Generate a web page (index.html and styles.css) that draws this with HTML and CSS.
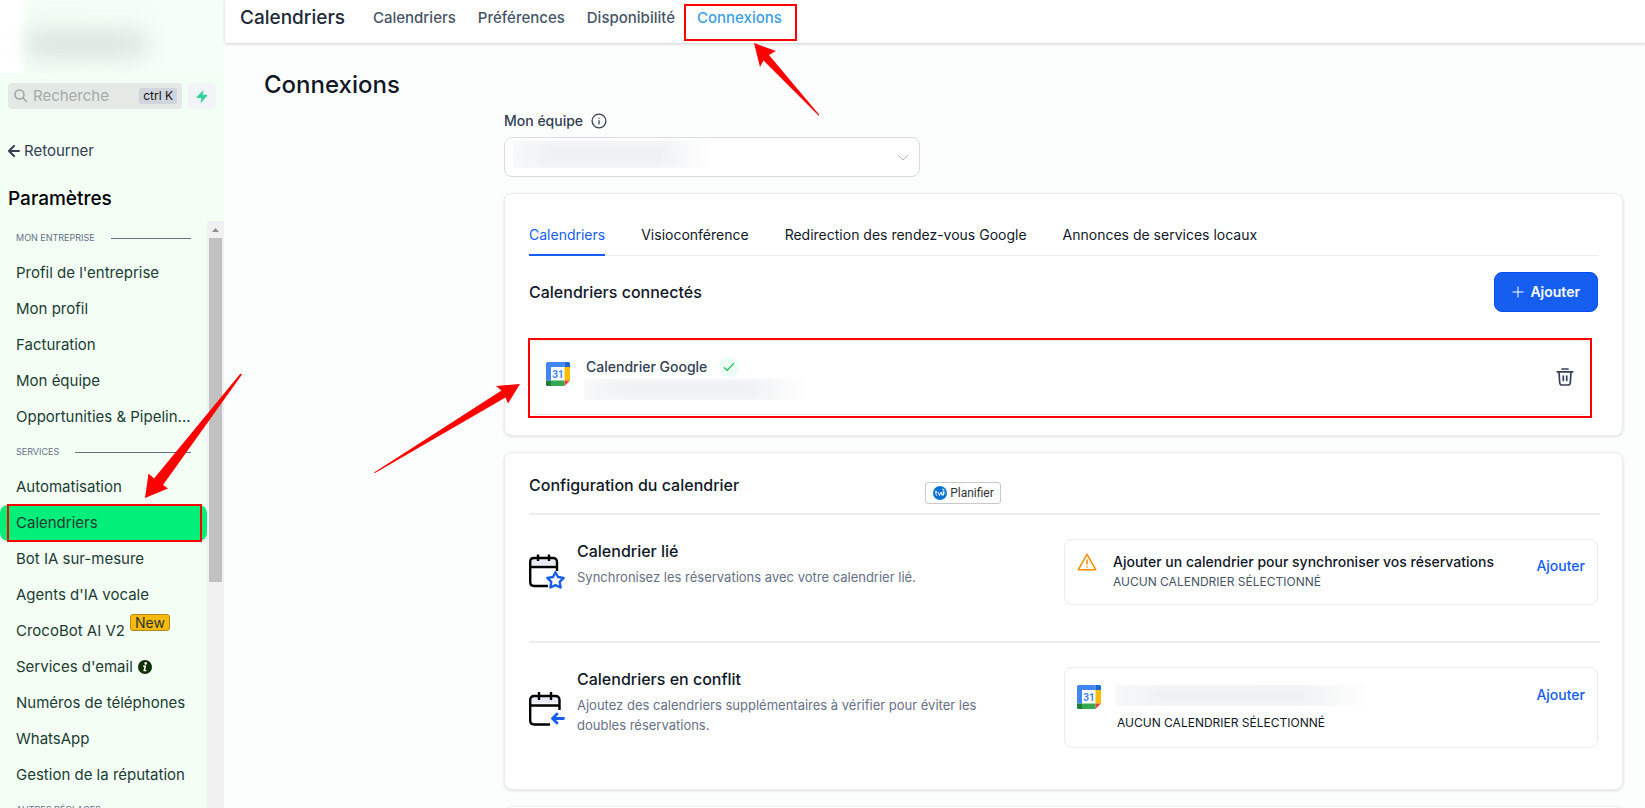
FILE: index.html
```html
<!DOCTYPE html>
<html lang="fr">
<head>
<meta charset="utf-8">
<title>Connexions - Calendriers</title>
<link rel="stylesheet" href="styles.css">
</head>
<body>
<svg class="defs" aria-hidden="true">
  <symbol id="gcal" viewBox="0 0 24 24">
    <path fill="#fff" d="M5 5h14v14H5z"/>
    <path fill="#4285f4" d="M1.500 0H18.500V5H5V18.500H0V1.500A1.500 1.500 0 0 1 1.500 0z"/>
    <path fill="#1967d2" d="M18.500 0h4A1.500 1.500 0 0 1 24 1.500V5h-5.500z"/>
    <path fill="#fbbc04" d="M18.500 5H24v13.500h-5.500z"/>
    <path fill="#34a853" d="M5 18.500h13.500V24H5z"/>
    <path fill="#188038" d="M0 18.500h5V24H1.500A1.500 1.500 0 0 1 0 22.500z"/>
    <path fill="#ea4335" d="M18.500 18.500H24L18.500 24z"/>
  </symbol>
</svg>

<div class="app">
  <aside class="sidebar">
    <div class="brand"><div class="brand-blur"></div></div>
    <div class="search-row">
      <label class="search">
        <svg width="14" height="14" viewBox="0 0 14 14" fill="none" stroke="#9aaba3" stroke-width="1.600"><circle cx="5.500" cy="5.500" r="4.500"/><path d="M8.800 8.800L13 13"/></svg>
        <input type="text" placeholder="Recherche" aria-label="Recherche">
        <kbd>ctrl K</kbd>
      </label>
      <button class="bolt" type="button" aria-label="Actions rapides">
        <svg width="12" height="13" viewBox="0 0 12 13" fill="#34d399"><path d="M7 0.500Q7.500 0 7.300 1L6.800 4.700H10.800Q11.800 4.900 11.200 5.800L5.300 12.600Q4.700 13 4.800 12.200L5.300 8H1Q0 7.800 0.700 6.900z"/></svg>
      </button>
    </div>
    <a class="back" href="#">
      <svg width="12" height="12" viewBox="0 0 12 12" fill="none" stroke="#344054" stroke-width="2" stroke-linecap="round" stroke-linejoin="round"><path d="M6 1L1 6l5 5M1.500 6h9.500"/></svg>
      Retourner
    </a>
    <h2 class="side-title">Paramètres</h2>
    <div class="nav-wrap">
      <nav class="nav">
        <div class="nav-head"><span>MON ENTREPRISE</span></div>
        <a href="#">Profil de l'entreprise</a>
        <a href="#">Mon profil</a>
        <a href="#">Facturation</a>
        <a href="#">Mon équipe</a>
        <a href="#">Opportunities &amp; Pipelin...</a>
        <div class="nav-head"><span>SERVICES</span></div>
        <a href="#">Automatisation</a>
        <a href="#" class="active">Calendriers<span class="mark mark-nav"></span></a>
        <a href="#">Bot IA sur-mesure</a>
        <a href="#">Agents d'IA vocale</a>
        <a href="#">CrocoBot AI V2 <span class="new">New</span></a>
        <a href="#">Services d'email
          <svg width="14" height="14" viewBox="0 0 14 14"><circle cx="7" cy="7" r="7" fill="#123008"/><circle cx="7.700" cy="3.400" r="1.300" fill="#fff"/><path d="M5.200 5.600h3l-1 4.300h1.200v1.400H5.300l1-4.300H5.200z" fill="#fff"/></svg>
        </a>
        <a href="#">Numéros de téléphones</a>
        <a href="#">WhatsApp</a>
        <a href="#">Gestion de la réputation</a>
        <div class="nav-head"><span>AUTRES RÉGLAGES</span></div>
      </nav>
      <div class="scrollbar">
        <svg width="17" height="17" viewBox="0 0 17 17"><path d="M5 11h7L8.500 7z" fill="#8f8f8f"/></svg>
        <div class="thumb"></div>
      </div>
    </div>
  </aside>

  <div class="main">
    <header class="topbar">
      <h1>Calendriers</h1>
      <nav class="top-links">
        <a href="#">Calendriers</a>
        <a href="#">Préférences</a>
        <a href="#">Disponibilité</a>
        <a href="#" class="current">Connexions<span class="mark mark-top"></span></a>
      </nav>
    </header>

    <main class="content">
      <h2 class="page-title">Connexions</h2>
      <div class="column">
        <div class="team">
          <label for="team">Mon équipe
            <svg width="16" height="16" viewBox="0 0 16 16" fill="none" stroke="#344054" stroke-width="1.300" stroke-linecap="round"><circle cx="8" cy="8" r="6.900"/><path d="M8 7.700v3.200M8 5.200v.1"/></svg>
          </label>
          <div class="select-box">
            <select id="team"><option></option></select>
            <span class="blur blur-team"></span>
            <svg class="chevron" width="12" height="8" viewBox="0 0 12 8" fill="none" stroke="#b4b9c2"><path d="M1 1l5 5 5-5"/></svg>
          </div>
        </div>

        <section class="card connected">
          <div class="tabs" role="tablist">
            <button type="button" role="tab" class="selected">Calendriers</button>
            <button type="button" role="tab">Visioconférence</button>
            <button type="button" role="tab">Redirection des rendez-vous Google</button>
            <button type="button" role="tab">Annonces de services locaux</button>
          </div>
          <div class="card-head">
            <h3>Calendriers connectés</h3>
            <button type="button" class="primary">
              <svg width="12" height="12" viewBox="0 0 12 12" stroke="#fff" fill="none"><path d="M6 .500v11M.500 6h11"/></svg>
              Ajouter
            </button>
          </div>
          <div class="account">
            <span class="mark mark-account"></span>
            <svg class="gcal" width="24" height="24"><use href="#gcal"/><text x="12" y="16">31</text></svg>
            <div class="account-text">
              <div class="account-name">Calendrier Google
                <span class="ok"><svg width="12" height="10" viewBox="0 0 12 10" fill="none" stroke="#12b75a" stroke-width="1.200"><path d="M1 5.300l3.200 3.200L11 1.200"/></svg></span>
              </div>
              <div class="blur blur-account"></div>
            </div>
            <button type="button" class="trash" aria-label="Supprimer">
              <svg width="18" height="18" viewBox="0 0 18 18" fill="none" stroke="#344054" stroke-width="1.700" stroke-linecap="round"><path d="M6 1h6M1.200 3.800h15.600M3 4l.7 10.700q.2 2.300 2.300 2.300h6q2.100 0 2.300-2.300L15 4M7.300 8v4.500M10.700 8v4.500"/></svg>
            </button>
          </div>
        </section>

        <section class="card config">
          <div class="config-head">
            <h3>Configuration du calendrier</h3>
            <button type="button" class="plan">
              <svg width="14" height="14" viewBox="0 0 14 14"><circle cx="7" cy="7" r="7" fill="#0b74d1"/><path d="M3 4.500v4q0 1 1.200.8M2 6h2.300M5 6l1.500 3.500L8 6l1.200 3.500L11 5.500M9 3.500q1.500-1 2 .4t-1.500 1.800M10.500 6v3.500M10.500 7h2" fill="none" stroke="#fff" stroke-width=".9"/></svg>
              Planifier
            </button>
          </div>
          <div class="setting">
            <svg class="cal-icon" width="36" height="36" viewBox="0 0 36 36" fill="none" stroke="#000" stroke-width="2.400">
              <path d="M2 12V9q0-4 4-4h18q4 0 4 4v3z" fill="#eaecf5" stroke="none"/>
              <path d="M28 18V9q0-4-4-4H5Q1.200 5 1.200 9v20q0 4 4 4H19M1.200 14H28M9 1.500V8M20 1.500V8"/>
              <path d="M26.500 19.300l2.500 4.700 5.600.9-3.900 4 .9 5.600-5.100-2.400-5.100 2.400.9-5.600-3.900-4 5.600-.9z" fill="#fff" stroke="#155eef" stroke-linejoin="round"/>
            </svg>
            <div class="setting-text">
              <h4>Calendrier lié</h4>
              <p>Synchronisez les réservations avec votre calendrier lié.</p>
            </div>
            <div class="box box-linked">
              <svg class="warn" width="20" height="18" viewBox="0 0 20 18" fill="none" stroke="#f79009" stroke-width="1.600" stroke-linejoin="round" stroke-linecap="round"><path d="M10 1.300L18.700 16.700H1.300zM10 7v4M10 13.700v.2"/></svg>
              <div class="box-text">
                <strong>Ajouter un calendrier pour synchroniser vos réservations</strong>
                <span>AUCUN CALENDRIER SÉLECTIONNÉ</span>
              </div>
              <button type="button" class="link">Ajouter</button>
            </div>
          </div>
          <div class="setting">
            <svg class="cal-icon" width="36" height="36" viewBox="0 0 36 36" fill="none" stroke="#000" stroke-width="2.400">
              <path d="M2 12V9q0-4 4-4h20q4 0 4 4v3z" fill="#eaecf5" stroke="none"/>
              <path d="M30.500 19V9q0-4-4-4H5.200q-4 0-4 4v20.500q0 4 4 4H21M1.200 14.500h29.300M10 1v8M22 1v8"/>
              <path d="M34.500 27.500H23.500M28 23l-4.500 4.500L28 32" stroke="#155eef" stroke-width="2.800" stroke-linecap="round" stroke-linejoin="round"/>
            </svg>
            <div class="setting-text">
              <h4>Calendriers en conflit</h4>
              <p>Ajoutez des calendriers supplémentaires à vérifier pour éviter les doubles réservations.</p>
            </div>
            <div class="box box-conflict">
              <svg class="gcal" width="24" height="24"><use href="#gcal"/><text x="12" y="16">31</text></svg>
              <div class="box-text">
                <div class="blur blur-box"></div>
                <span>AUCUN CALENDRIER SÉLECTIONNÉ</span>
              </div>
              <button type="button" class="link">Ajouter</button>
            </div>
          </div>
        </section>
        <section class="card"></section>
      </div>
    </main>
  </div>

  <svg class="arrow arrow-top" width="70" height="76" viewBox="0 0 70 76"><path d="M2 1L24 9 17 13 67 72.500V74L11.500 18.500 8 25z"/></svg>
  <svg class="arrow arrow-nav" width="100" height="128" viewBox="0 0 100 128"><path d="M2 127L5.500 102.500 11 107.500 97.500 2.500 99 3.500 20 114 25 117.500z"/></svg>
  <svg class="arrow arrow-account" width="148" height="92" viewBox="0 0 148 92"><path d="M147 2L123 4 128.500 8.500 1 90.500 2 91 132.500 15.500 135 21.500z"/></svg>
</div>
</body>
</html>
```
FILE: styles.css
```css
* { box-sizing: border-box; }

body {
  margin: 0;
  font-family: Inter, "Liberation Sans", sans-serif;
  font-size: 14px;
  line-height: 20px;
  color: #101828;
}

h1, h2, h3, h4, p { margin: 0; font-weight: 500; }
a { color: inherit; text-decoration: none; }
button { font: inherit; border: 0; padding: 0; background: none; color: inherit; }
svg { flex: none; display: block; }
.defs { position: absolute; width: 0; height: 0; }
.gcal text { font: 700 10px Roboto, sans-serif; fill: #4285f4; text-anchor: middle; }

.app {
  position: relative;
  display: flex;
  height: 100vh;
  overflow: hidden;
  background: #fcfefd;
}

/* Sidebar */
.sidebar {
  flex: none;
  width: 224px;
  display: flex;
  flex-direction: column;
  background: #f3fff5;
}

.brand {
  height: 73px;
  flex: none;
  overflow: hidden;
  background: linear-gradient(90deg, #fff 20px, #f3fdf5 30px, #f5fff7);
}

.brand-blur {
  width: 116px;
  height: 24px;
  margin: 32px 0 0 28px;
  background: #d7e3dc;
  filter: blur(11px);
}

.search-row { display: flex; gap: 6px; padding: 10px 8px 0; }

.search {
  flex: 1;
  min-width: 0;
  height: 26px;
  display: flex;
  align-items: center;
  gap: 4px;
  padding: 0 5px 0 6px;
  border-radius: 4px;
  background: #e4e9e5;
}

.search input {
  flex: 1;
  min-width: 0;
  padding: 0 0 0 1px;
  border: 0;
  background: none;
  font: inherit;
  font-size: 15px;
}

.search input::placeholder { color: #a3aca9; opacity: 1; }

.search kbd {
  padding: 0 4px;
  border-radius: 2px;
  background: #d0d5dd;
  color: #111;
  font: 400 12px/16px Inter, sans-serif;
}

.bolt {
  width: 28px;
  height: 26px;
  display: grid;
  place-items: center;
  border-radius: 4px;
  background: #f2f4f7;
}

.back {
  display: flex;
  align-items: center;
  gap: 4px;
  padding: 32px 8px 0;
  font-size: 15px;
  color: #344054;
}

.side-title { padding: 26px 8px 10px; font-size: 19px; line-height: 24px; color: #000; }

.nav-wrap { flex: 1; min-height: 0; display: flex; overflow: hidden; }
.nav { flex: 1; min-width: 0; color: #1c3b33; font-size: 15px; }

.nav > a {
  position: relative;
  height: 36px;
  display: flex;
  align-items: center;
  gap: 5px;
  padding-left: 16px;
  white-space: nowrap;
}

.nav > a.active { border-radius: 8px; background: #02ef79; }

.nav-head {
  height: 34px;
  display: flex;
  align-items: center;
  gap: 16px;
  padding: 0 16px;
  font-size: 9px;
  color: #667085;
  white-space: nowrap;
}

.nav-head::after { content: ""; flex: 1; height: 1px; background: #667085; }

.new {
  align-self: flex-start;
  margin-top: 1px;
  padding: 0 4px;
  border: 1px solid #b08a1a;
  border-radius: 3px;
  background: #fdb90b;
  font-size: 14px;
  line-height: 15px;
}

.scrollbar { width: 17px; background: #f1f1f1; }
.thumb { height: 344px; margin: 0 2px; background: #c1c1c1; }

/* Top bar */
.main { flex: 1; min-width: 0; margin-left: 1px; }

.topbar {
  height: 43px;
  display: flex;
  align-items: center;
  gap: 28px;
  padding: 0 15px 8px;
  background: #fff;
  box-shadow: 0 1px 3px #10182833;
}

.topbar h1 { font-size: 19px; line-height: 24px; color: #1d2939; }
.top-links { display: flex; gap: 22px; font-size: 15px; font-weight: 500; color: #475467; }
.top-links a { position: relative; }
.top-links .current { color: #3ba0dc; }

/* Content */
.content { padding: 26px 22px 0 39px; }
.page-title { font-size: 24px; line-height: 32px; }
.column { margin: 10px 0 0 240px; display: flex; flex-direction: column; gap: 16px; }

.team label { display: flex; align-items: center; gap: 8px; font-weight: 500; color: #344054; }
.select-box { position: relative; width: 416px; max-width: 100%; height: 40px; margin-top: 6px; }

.select-box select {
  width: 100%;
  height: 100%;
  appearance: none;
  border: 1px solid #d9dce3;
  border-radius: 8px;
  background: #fff;
}

.chevron { position: absolute; right: 11px; top: 17px; }

/* Masked values */
.blur {
  background: linear-gradient(90deg, #f7f8f9, #f0f1f2 20%, #f0f1f3 75%, #fff);
  box-shadow: inset 0 0 8px #fafbfb;
}
.blur-team { position: absolute; left: 9px; top: 4px; width: 195px; height: 27px; }
.blur-account { width: 219px; height: 21px; }
.blur-box { width: 248px; height: 21px; }

.card {
  min-height: 60px;
  padding: 24px;
  border: 1px solid #eaecf0;
  border-radius: 8px;
  background: #fff;
  box-shadow: 0 1px 3px #1018281f;
}

.card h3, .card h4 { font-size: 16px; line-height: 24px; }

.tabs { display: flex; gap: 36px; padding-top: 7px; border-bottom: 1px solid #eaecf0; }
.tabs button { height: 31px; margin-bottom: -1px; padding-bottom: 9px; border-bottom: 2px solid transparent; white-space: nowrap; }
.tabs .selected { color: #155eef; border-color: #155eef; }

.card-head { display: flex; align-items: center; justify-content: space-between; margin-top: 16px; }

.primary {
  height: 40px;
  display: flex;
  align-items: center;
  gap: 6px;
  padding: 0 17px;
  border: 1px solid #004eeb;
  border-radius: 8px;
  background: #155eef;
  color: #fff;
  font-weight: 600;
}

.account {
  position: relative;
  height: 75px;
  display: flex;
  align-items: flex-start;
  margin: 28px 7px 0 0;
  padding: 14px 16px 0;
  border: 1px solid #eaecf0;
  border-radius: 8px;
}

.account .gcal { margin-top: 7px; }
.account-text { flex: 1; margin-left: 14px; }
.account-name { display: flex; align-items: center; gap: 12px; height: 24px; padding-left: 2px; font-weight: 500; color: #344054; }
.ok { width: 20px; height: 20px; display: grid; place-items: center; border-radius: 50%; background: #ecfdf3; }
.trash { margin: 13px 0 0; }

.connected { padding-bottom: 20px; }

.config { padding: 20px 22px 29px 24px; }
.config-head { display: flex; align-items: flex-start; gap: 186px; height: 40px; }
.config-head .plan { margin-top: 9px; }

.plan {
  height: 22px;
  display: flex;
  align-items: center;
  gap: 3px;
  padding: 0 6px 0 7px;
  border: 1px solid #c9c9c9;
  border-radius: 3px;
  color: #333;
  font: 12px/18px Roboto, sans-serif;
}

.setting {
  height: 128px;
  display: grid;
  grid-template-columns: 36px 1fr 534px;
  column-gap: 12px;
  align-items: start;
  padding: 24px 2px 0 0;
  border-top: 2px solid #eaecf0;
}

.setting + .setting { height: auto; padding-bottom: 12px; }
.setting-text { padding-right: 70px; }
.setting-text p { margin-top: 4px; font-size: 13px; font-weight: 400; color: #667085; }
.cal-icon { margin-top: 14px; }
.setting + .setting .cal-icon { margin-top: 24px; }

.box {
  display: flex;
  align-items: flex-start;
  padding: 0 12px;
  border: 1px solid #eaecf0;
  border-radius: 8px;
}

.box-linked { height: 66px; padding-top: 12px; }
.box-conflict { height: 81px; padding-top: 17px; }
.box-text { flex: 1; margin-left: 16px; }
.box-text strong { display: block; font-weight: 500; }
.box-text span { display: block; font-size: 12px; color: #475467; }
.box-conflict .box-text { margin-left: 14px; }
.box-conflict .box-text span { margin: 7px 0 0 2px; color: #101828; }
.box-linked .warn { margin-top: 1px; }
.link { color: #155eef; font-weight: 500; }
.box-linked .link { margin-top: 4px; }

/* Annotations */
.mark { position: absolute; border: 2px solid #f00; pointer-events: none; }
.mark-nav { inset: -1px 5px -1px 7px; }
.mark-top { inset: -4px -15px -13px -13px; }
.mark-account { inset: -3px -2px -4px -2px; }
.arrow { position: absolute; fill: #f00; pointer-events: none; }
.arrow-top { left: 752px; top: 42px; }
.arrow-nav { left: 143px; top: 371px; }
.arrow-account { left: 373px; top: 382px; }
```
